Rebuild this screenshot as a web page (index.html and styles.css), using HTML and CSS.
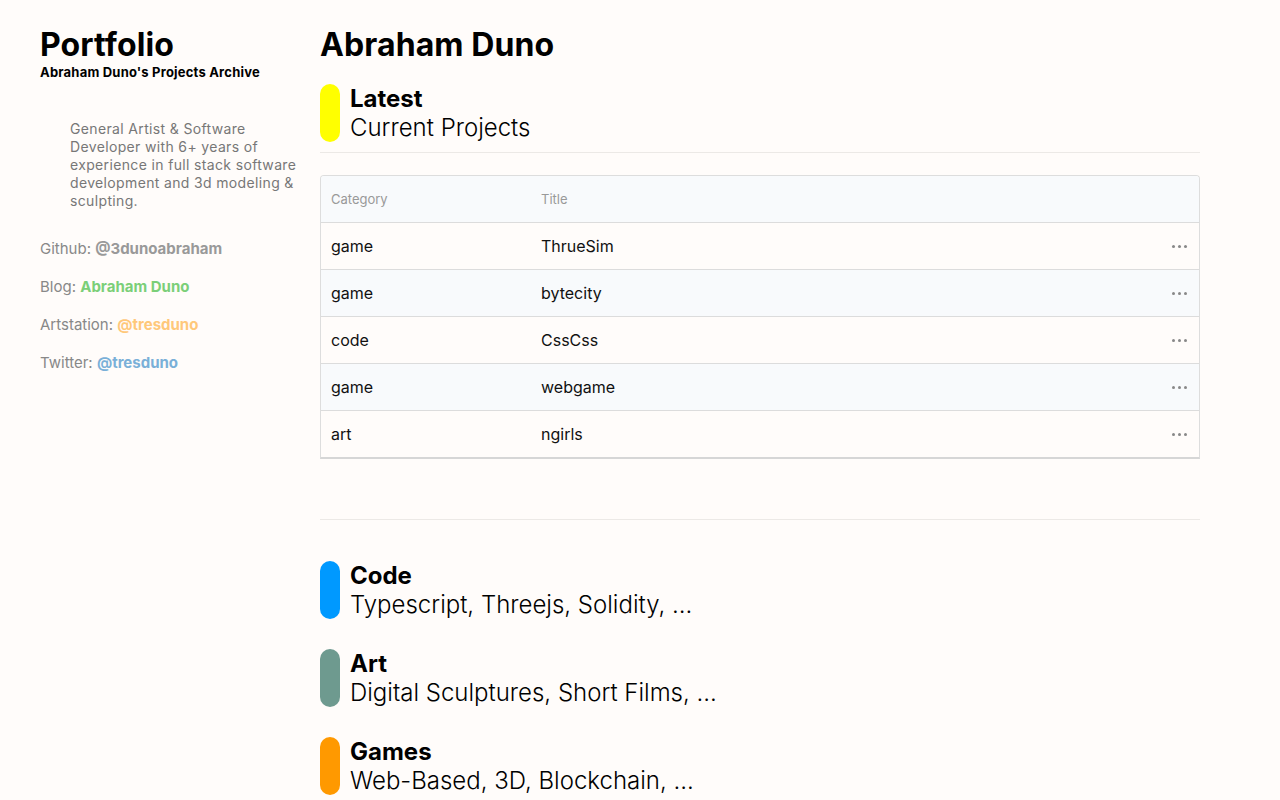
FILE: index.html
```html
<!DOCTYPE html>
<html>
<head>
<meta charset="utf-8">
<link rel="stylesheet" href="styles.css">
</head>
<body>
<div class="page">
  <aside class="sidebar">
    <h1 class="site-title">Portfolio</h1>
    <div class="site-sub">Abraham Duno's Projects Archive</div>
    <p class="bio">General Artist &amp; Software Developer with 6+ years of experience in full stack software development and 3d modeling &amp; sculpting.</p>
    <ul class="links">
      <li>Github: <b class="l-gray">@3dunoabraham</b></li>
      <li>Blog: <b class="l-green">Abraham Duno</b></li>
      <li>Artstation: <b class="l-orange">@tresduno</b></li>
      <li>Twitter: <b class="l-blue">@tresduno</b></li>
    </ul>
  </aside>
  <main class="main">
    <h1 class="name">Abraham Duno</h1>
    <div class="section">
      <span class="bar bar-yellow"></span>
      <div class="sec-text">
        <div class="sec-title">Latest</div>
        <div class="sec-sub">Current Projects</div>
      </div>
    </div>
    <hr class="rule rule-top">
    <div class="table">
      <div class="row head"><span class="c1">Category</span><span class="c2">Title</span><span class="c3"></span></div>
      <div class="row"><span class="c1">game</span><span class="c2">ThrueSim</span><span class="c3 dots"><i></i><i></i><i></i></span></div>
      <div class="row alt"><span class="c1">game</span><span class="c2">bytecity</span><span class="c3 dots"><i></i><i></i><i></i></span></div>
      <div class="row"><span class="c1">code</span><span class="c2">CssCss</span><span class="c3 dots"><i></i><i></i><i></i></span></div>
      <div class="row alt"><span class="c1">game</span><span class="c2">webgame</span><span class="c3 dots"><i></i><i></i><i></i></span></div>
      <div class="row last"><span class="c1">art</span><span class="c2">ngirls</span><span class="c3 dots"><i></i><i></i><i></i></span></div>
    </div>
    <hr class="rule rule-mid">
    <div class="cats">
      <div class="section">
        <span class="bar bar-blue"></span>
        <div class="sec-text">
          <div class="sec-title">Code</div>
          <div class="sec-sub">Typescript, Threejs, Solidity, ...</div>
        </div>
      </div>
      <div class="section">
        <span class="bar bar-teal"></span>
        <div class="sec-text">
          <div class="sec-title">Art</div>
          <div class="sec-sub">Digital Sculptures, Short Films, ...</div>
        </div>
      </div>
      <div class="section">
        <span class="bar bar-orange"></span>
        <div class="sec-text">
          <div class="sec-title">Games</div>
          <div class="sec-sub">Web-Based, 3D, Blockchain, ...</div>
        </div>
      </div>
    </div>
  </main>
</div>
</body>
</html>
```

FILE: styles.css
```css
* { box-sizing: border-box; }
html, body { margin: 0; padding: 0; }
body {
  background: #fffcfa;
  font-family: Inter, "Noto Sans", sans-serif;
  color: #000;
  overflow: hidden;
}
.page {
  display: flex;
  padding: 28px 0 0 40px;
  gap: 20px;
}
.sidebar {
  width: 260px;
  flex: none;
}
.site-title {
  margin: 0;
  font-size: 32px;
  font-weight: 700;
  line-height: 34px;
  letter-spacing: 0.1px;
}
.site-sub {
  font-size: 13px;
  font-weight: 700;
  line-height: 16px;
  margin-top: 2px;
  letter-spacing: 0.2px;
}
.bio {
  margin: 40px 0 0 30px;
  font-size: 14px;
  line-height: 18px;
  color: #777;
  width: 240px;
  letter-spacing: 0.35px;
}
.links {
  list-style: none;
  margin: 30px 0 0;
  padding: 0;
  display: flex;
  flex-direction: column;
  gap: 20px;
  font-size: 15px;
  line-height: 18px;
  color: #888;
}
.links b { font-weight: 700; }
.l-gray { color: #999; }
.l-green { color: #7bcf78; }
.l-orange { color: #ffc87a; }
.l-blue { color: #7ab0d8; }

.main {
  width: 880px;
  flex: none;
}
.name {
  margin: 0;
  font-size: 32px;
  font-weight: 700;
  line-height: 34px;
  letter-spacing: 0.1px;
}
.section {
  display: flex;
  align-items: center;
  gap: 10px;
}
.main > .section { margin-top: 22px; }
.bar {
  width: 20px;
  height: 58px;
  border-radius: 10px;
  flex: none;
}
.bar-yellow { background: #ffff00; }
.bar-blue { background: #0099ff; }
.bar-teal { background: #6e9a8f; }
.bar-orange { background: #ff9900; }
.sec-title {
  font-size: 24px;
  font-weight: 700;
  line-height: 29px;
}
.sec-sub {
  font-size: 24px;
  font-weight: 300;
  line-height: 29px;
}
.rule {
  border: 0;
  border-top: 1px solid #ece9e6;
  margin: 0;
}
.rule-top { margin-top: 10px; }
.table {
  margin-top: 22px;
  border: 1px solid #ddd;
  border-bottom: 2px solid #d6d6d6;
  border-radius: 4px 4px 0 0;
  overflow: hidden;
}
.row {
  display: flex;
  align-items: center;
  height: 47px;
  border-top: 1px solid #dcdcdc;
  font-size: 16px;
  color: #111;
  background: #fffcfa;
}
.row.head {
  border-top: 0;
  height: 46px;
  background: #f8fafc;
  color: #999;
  font-size: 13px;
}
.row.alt { background: #f8fafc; }
.c1 { width: 210px; padding-left: 10px; flex: none; }
.c2 { flex: 1; padding-left: 10px; }
.c3 { width: 40px; flex: none; }
.dots {
  display: flex;
  gap: 3px;
  justify-content: flex-start;
  padding-left: 13px;
}
.dots i {
  width: 3px;
  height: 3px;
  border-radius: 50%;
  background: #888;
}
.rule-mid { margin-top: 60px; }
.cats {
  margin-top: 41px;
  display: flex;
  flex-direction: column;
  gap: 30px;
}
```
